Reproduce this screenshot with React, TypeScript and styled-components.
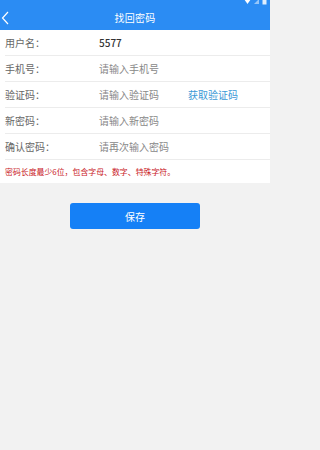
import React from 'react';
import styled, { createGlobalStyle } from 'styled-components';

const GlobalStyle = createGlobalStyle`
  html, body {
    margin: 0;
    padding: 0;
    background: #f2f2f2;
  }
  body {
    font-family: "Noto Sans CJK SC", "Noto Sans", sans-serif;
  }
`;

const Page = styled.div`
  width: 270px;
  min-height: 450px;
  background: #f2f2f2;
`;

const Header = styled.div`
  position: relative;
  height: 30px;
  background: #2b8cf3;
  display: flex;
  align-items: center;
  justify-content: center;
  color: #fff;
  font-size: 10px;
`;

const BackButton = styled.div`
  position: absolute;
  left: 1px;
  top: 11px;
  display: flex;
`;

const StatusIcons = styled.div`
  position: absolute;
  right: 3px;
  top: -3px;
  display: flex;
  gap: 3px;
  align-items: center;
`;

const Title = styled.div`
  margin-top: 4px;
  letter-spacing: 0.3px;
`;

const Form = styled.div`
  background: #fff;
`;

const Row = styled.div`
  height: 25px;
  margin-left: 5px;
  display: flex;
  align-items: center;
  border-bottom: 1px solid #ececec;
  font-size: 10px;
`;

const Label = styled.div`
  width: 94px;
  color: #666;
`;

const Value = styled.div<{ $placeholder?: boolean }>`
  flex: 1;
  color: ${(p) => (p.$placeholder ? '#888' : '#333')};
  font-weight: ${(p) => (p.$placeholder ? 400 : 500)};
`;

const CodeLink = styled.div`
  width: 82px;
  color: #3a98d6;
`;

const Hint = styled.div`
  height: 23px;
  padding-left: 5px;
  display: flex;
  align-items: center;
  color: #c9171e;
  font-size: 7.9px;
`;

const ButtonWrap = styled.div`
  display: flex;
  justify-content: center;
  padding-top: 20px;
`;

const SaveButton = styled.button`
  width: 130px;
  height: 26px;
  border: none;
  border-radius: 3px;
  background: #1580f6;
  color: #fff;
  font-family: inherit;
  font-size: 10px;
  padding: 0;
`;

const fields = [
  { label: '用户名：', value: '5577', placeholder: false },
  { label: '手机号：', value: '请输入手机号', placeholder: true },
  { label: '验证码：', value: '请输入验证码', placeholder: true, code: true },
  { label: '新密码：', value: '请输入新密码', placeholder: true },
  { label: '确认密码：', value: '请再次输入密码', placeholder: true },
];

const App: React.FC = () => {
  return (
    <Page>
      <GlobalStyle />
      <Header>
        <BackButton>
          <svg width="9" height="14" viewBox="0 0 9 14">
            <path d="M7 1 L1.5 7 L7 13" fill="none" stroke="#fff" strokeWidth="1.2" />
          </svg>
        </BackButton>
        <StatusIcons>
          <svg width="7" height="7" viewBox="0 0 7 7">
            <path d="M0 1 L7 1 L3.5 6 Z" fill="#fff" />
          </svg>
          <svg width="5" height="7" viewBox="0 0 5 7">
            <path d="M0 6 L5 1 L5 6 Z" fill="rgba(255,255,255,0.5)" />
          </svg>
          <svg width="5" height="8" viewBox="0 0 5 8">
            <rect x="0.5" y="0.5" width="4" height="7" fill="rgba(255,255,255,0.85)" />
          </svg>
        </StatusIcons>
        <Title>找回密码</Title>
      </Header>
      <Form>
        {fields.map((f) => (
          <Row key={f.label}>
            <Label>{f.label}</Label>
            <Value $placeholder={f.placeholder}>{f.value}</Value>
            {f.code && <CodeLink>获取验证码</CodeLink>}
          </Row>
        ))}
        <Hint>密码长度最少6位，包含字母、数字、特殊字符。</Hint>
      </Form>
      <ButtonWrap>
        <SaveButton>保存</SaveButton>
      </ButtonWrap>
    </Page>
  );
};

export default App;
